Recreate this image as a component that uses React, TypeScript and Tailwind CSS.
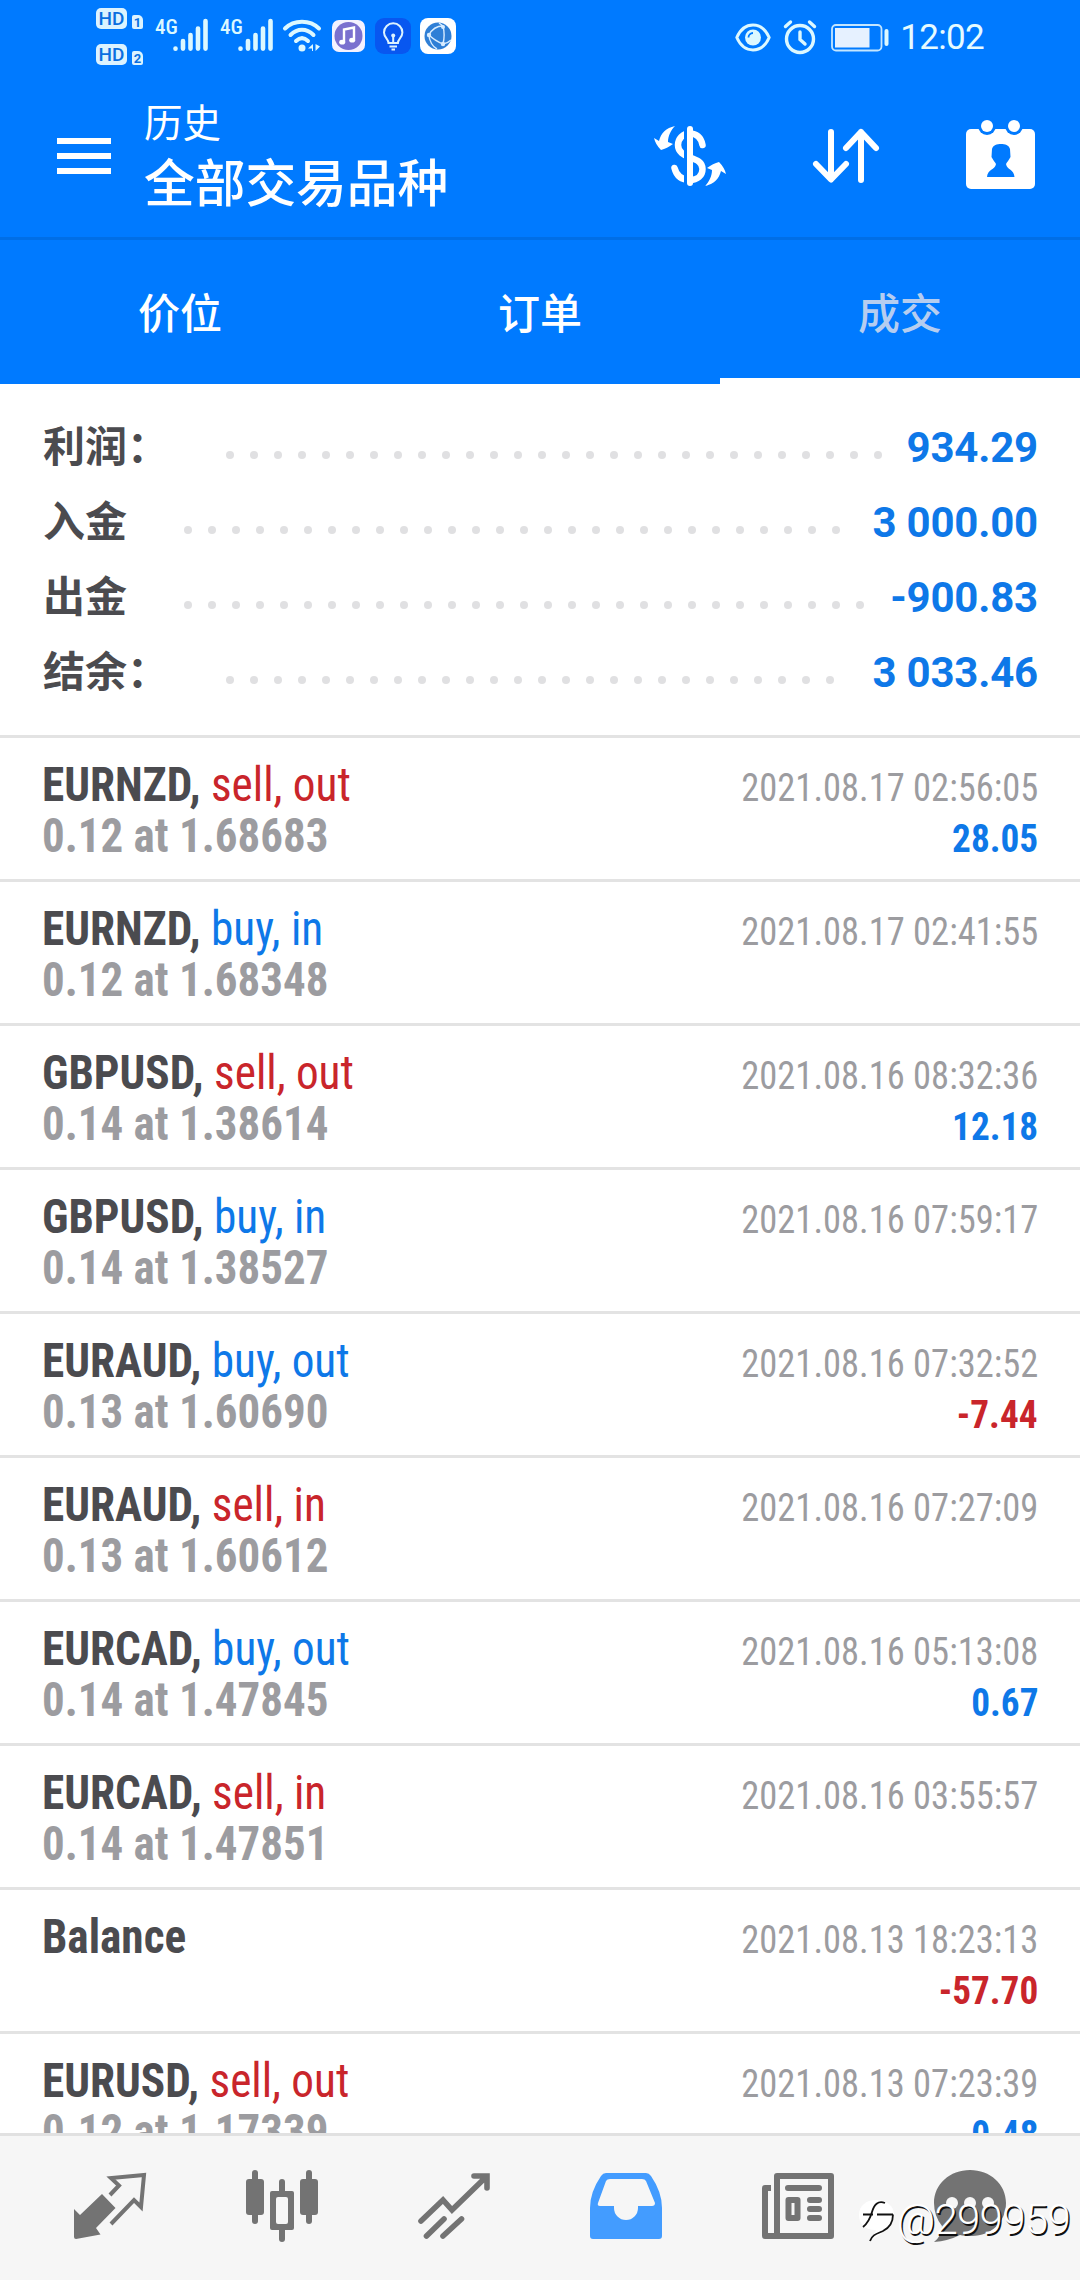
import type { ReactNode } from 'react';

const totals = [
  { label: '利润：', value: '934.29', dots: 28 },
  { label: '入金', value: '3 000.00', dots: 28 },
  { label: '出金', value: '-900.83', dots: 29 },
  { label: '结余：', value: '3 033.46', dots: 26 },
];

interface Deal {
  symbol: string;
  action?: string;
  volume?: string;
  time: string;
  profit?: string;
}

const deals: Deal[] = [
  { symbol: 'EURNZD', action: 'sell, out', volume: '0.12 at 1.68683', time: '2021.08.17 02:56:05', profit: '28.05' },
  { symbol: 'EURNZD', action: 'buy, in', volume: '0.12 at 1.68348', time: '2021.08.17 02:41:55' },
  { symbol: 'GBPUSD', action: 'sell, out', volume: '0.14 at 1.38614', time: '2021.08.16 08:32:36', profit: '12.18' },
  { symbol: 'GBPUSD', action: 'buy, in', volume: '0.14 at 1.38527', time: '2021.08.16 07:59:17' },
  { symbol: 'EURAUD', action: 'buy, out', volume: '0.13 at 1.60690', time: '2021.08.16 07:32:52', profit: '-7.44' },
  { symbol: 'EURAUD', action: 'sell, in', volume: '0.13 at 1.60612', time: '2021.08.16 07:27:09' },
  { symbol: 'EURCAD', action: 'buy, out', volume: '0.14 at 1.47845', time: '2021.08.16 05:13:08', profit: '0.67' },
  { symbol: 'EURCAD', action: 'sell, in', volume: '0.14 at 1.47851', time: '2021.08.16 03:55:57' },
  { symbol: 'Balance', time: '2021.08.13 18:23:13', profit: '-57.70' },
  { symbol: 'EURUSD', action: 'sell, out', volume: '0.12 at 1.17339', time: '2021.08.13 07:23:39', profit: '0.48' },
];

function HdBadge({ sim }: { sim: number }) {
  return (
    <div className="flex items-end gap-[5px]">
      <span className="flex h-[21px] w-[31px] items-center justify-center rounded-[5px] bg-[#dcf3ff] text-[19px] font-medium leading-none text-[#0a6fe0]">
        HD
      </span>
      <span className="flex h-[14px] w-[11px] items-center justify-center rounded-[2px] rounded-tr-[5px] bg-[#dcf3ff] text-[13px] font-bold leading-none text-[#0a6fe0]">
        {sim}
      </span>
    </div>
  );
}

function Signal() {
  return (
    <div className="flex w-[54px] items-start">
      <span className="w-[18px] text-[21px] font-medium leading-[18px] [font-stretch:75%]">4G</span>
      <svg className="h-[34px] w-[36px] shrink-0" viewBox="0 0 36 34" stroke="#dcf8ff" strokeWidth="4.6" strokeLinecap="round">
        <path d="M2.5 30.6v.2M10 23v7.6M17.500 17v13.600M25 10.500v20.100M32.500 3v27.600" />
      </svg>
    </div>
  );
}

function StatusBar() {
  return (
    <div className="flex h-[72px] items-start pl-24 text-[#dcf8ff]">
      <div className="mt-2 flex w-[47px] flex-col gap-[15px]">
        <HdBadge sim={1} />
        <HdBadge sim={2} />
      </div>
      <div className="ml-[12px] mt-[18px] flex gap-[11px]">
        <Signal />
        <Signal />
      </div>
      <svg className="ml-[8px] mt-[18px] h-[36px] w-[40px]" viewBox="0 0 40 36" fill="none" stroke="#dcf8ff" strokeWidth="4" strokeLinecap="round">
        <path d="M3 10.500C12 1.500 28 1.500 37 10.500M8.500 17C15.500 10 24.500 10 31.500 17M14 23c4-3.800 8-3.800 12 0" />
        <circle cx="20" cy="30" r="3.500" fill="#dcf8ff" stroke="none" />
        <path d="M31 26v7h-1v-2.500h-4zM33.500 33v-7l4.500 2.500z" fill="#dcf8ff" stroke="none" />
      </svg>
      <svg className="ml-[10px] mt-[19px] h-[34px] w-[33px]" viewBox="0 0 33 34">
        <rect y="1" width="33" height="32" rx="7" fill="#f4f2ff" />
        <circle cx="16.500" cy="17" r="14" fill="#7a70cf" />
        <path d="M12 23V10.500l10-2v12" fill="none" stroke="#fff" strokeWidth="2.400" />
        <ellipse cx="10.200" cy="23.200" rx="3" ry="2.400" fill="#fff" />
        <ellipse cx="20.200" cy="21.200" rx="3" ry="2.400" fill="#fff" />
      </svg>
      <svg className="ml-[10px] mt-[18px] h-[36px] w-[36px]" viewBox="0 0 36 36" fill="none" stroke="#dcf3ff" strokeWidth="2">
        <rect width="36" height="36" rx="9" fill="#0857f0" stroke="none" />
        <path d="M13.500 25c0-4-4.500-5.500-4.500-10.500a9.200 9.200 0 0 1 18.400 0c0 5-4.500 6.500-4.500 10.500zM14.500 28.500h7.500M16.500 31.500h3.500M18.200 25v-8" />
        <circle cx="18.200" cy="17.500" r="2" fill="#dcf3ff" stroke="none" />
      </svg>
      <svg className="ml-[9px] mt-[18px] h-[36px] w-[36px]" viewBox="0 0 36 36" fill="none" stroke="#d8ecff" strokeWidth="1.400">
        <rect width="36" height="36" rx="8" fill="#fff" stroke="none" />
        <circle cx="18" cy="18" r="13.500" fill="#2f7fd6" stroke="none" />
        <path d="M9 17C12 11 17 8 23 8M9 17c4 4 9 7 14 9M23 8c1.500 6 1.500 12 0 18M9 17C9 23 13 29 17 31M23 26c3-.5 6-2 8-4M23 8l-4-3" />
        <g fill="#d8ecff" stroke="none">
          <circle cx="9" cy="17" r="2.200" />
          <circle cx="23" cy="9" r="2" />
          <circle cx="23" cy="26" r="2.200" />
        </g>
      </svg>

      <div className="ml-auto mr-[96px] mt-[18px] flex items-center">
        <svg className="h-[36px] w-[36px]" viewBox="0 0 36 36" fill="none" stroke="#dcf8ff" strokeWidth="3">
          <path d="M1.800 18.500C9 1.800 27 1.800 34.200 18.500C27 35 9 35 1.800 18.500z" strokeLinejoin="round" />
          <circle cx="18" cy="18.500" r="8" fill="#dcf8ff" stroke="none" />
          <path d="M13.500 18.500a4.500 4.500 0 0 1 4.500-4.500" stroke="#007aff" strokeWidth="1.800" />
        </svg>
        <svg className="ml-[12px] h-[36px] w-[34px]" viewBox="0 0 34 36" fill="none" stroke="#dcf8ff" strokeWidth="3.400" strokeLinecap="round">
          <circle cx="17" cy="20" r="13.500" />
          <path d="M2.500 7.500l5-4.500M31.500 7.500l-5-4.500M17 13v7.500l5 4.500" />
        </svg>
        <svg className="ml-[14px] h-[36px] w-[58px]" viewBox="0 0 58 36" fill="none">
          <rect x="1" y="6" width="49.500" height="25.500" rx="4" stroke="#c4e6ff" strokeWidth="1.800" />
          <rect x="4" y="9" width="34.500" height="19.500" fill="#e6f1ff" />
          <rect x="53.500" y="10" width="4" height="17" rx="2" fill="#dcf8ff" />
        </svg>
        <span className="ml-[11px] mt-[2px] text-[35px] leading-[36px] tracking-[-0.7px] text-[#e6fbff]">12:02</span>
      </div>
    </div>
  );
}

function Header() {
  return (
    <header className="flex h-[165px] items-center pl-[57px] pr-[42px] pt-[3px]">
      <div className="flex w-[54px] flex-col gap-[9px]">
        <span className="h-[6px] bg-white" />
        <span className="h-[6px] bg-white" />
        <span className="h-[6px] bg-white" />
      </div>
      <div className="ml-[33px] mt-[2px] text-white">
        <div className="text-[38.5px] leading-[56px]">历史</div>
        <div className="text-[50.7px] font-medium leading-[66px]">全部交易品种</div>
      </div>
      <div className="ml-auto flex gap-[84px]">
        <svg className="size-[72px]" viewBox="0 0 72 72" fill="none" stroke="#fff">
          <path d="M48.500 25C47 17 42 13.500 36 13.500C28.500 13.500 24 19 24 25C24 32 30 35 36 37.500C43 40 48.500 42 48.500 49C48.500 56 43 60 36 60C28 60 22.500 56 20.500 48" strokeWidth="6.5" strokeLinecap="round" />
          <path d="M31.500 6v60" stroke="#007aff" strokeWidth="3" />
          <path d="M36 9v54" strokeWidth="6" strokeLinecap="round" />
          <path d="M21 6C12 8 7 13 5 21L0 18C1 22 3 26 7 30C11 29 15 27 19 24L14 22C14 16 17 10 21 6z" fill="#fff" stroke="none" />
          <path d="M51 66C60 64 65 59 67 51L72 54C71 50 69 46 65 42C61 43 57 45 53 48L58 50C58 56 55 62 51 66z" fill="#fff" stroke="none" />
        </svg>
        <svg className="size-[72px]" viewBox="0 0 72 72" fill="none" stroke="#fff" strokeWidth="6" strokeLinecap="round" strokeLinejoin="round">
          <path d="M21 12v47M6 44l15 15.500L36 44M51 60V12M36 28l15-16l15 16" />
        </svg>
        <svg className="size-[72px] overflow-visible" viewBox="0 0 72 72" fill="#fff">
          <rect y="9" width="69" height="60" rx="5" />
          <circle cx="21" cy="6" r="9" fill="#007aff" />
          <circle cx="48" cy="6" r="9" fill="#007aff" />
          <circle cx="21" cy="6" r="6" />
          <circle cx="48" cy="6" r="6" />
          <path d="M26 29C27 25 31 24 35 24C39 24 43 25 44 29L44.500 37C43 40 41 42 40 44C41 50 48 49 48.500 57H21C21.500 49 29 50 30 44C29 42 27 40 25.500 37z" fill="#007aff" />
        </svg>
      </div>
    </header>
  );
}

function Tabs() {
  return (
    <nav className="grid h-[147px] grid-cols-3 border-t-[3px] border-[#006ee6] text-center text-[42px] font-medium leading-[138px] text-white">
      <div className="pt-[6px]">价位</div>
      <div className="pt-[6px]">订单</div>
      <div className="h-36 border-b-[6px] border-white pt-[6px] text-[#b5cdf0]">
        <div className="h-[132px]">成交</div>
      </div>
    </nav>
  );
}

function Totals() {
  return (
    <section className="h-[351px] pl-[43px] pr-[42px] pt-[26px]">
      {totals.map((row) => (
        <div key={row.label} className="flex h-[75px] items-center justify-between text-[42px] font-bold">
          <span className="text-[#4b4b4f]">{row.label}</span>
          <div className="mt-[15px] flex grow gap-4 pl-[57px]">
            {Array.from({ length: row.dots }, (_, i) => (
              <span key={i} className="size-2 rounded-full bg-[#e0e0e2]" />
            ))}
          </div>
          <span className="tracking-[-0.2px] text-[#0e78e8]">{row.value}</span>
        </div>
      ))}
    </section>
  );
}

function DealRow({ deal }: { deal: Deal }) {
  const actionColor = deal.action?.startsWith('sell') ? 'text-[#c9252b]' : 'text-[#0e78e8]';
  const profitColor = deal.profit?.startsWith('-') ? 'text-[#c9252b]' : 'text-[#0e78e8]';

  return (
    <div className="h-36 shrink-0 border-t-[3px] border-[#e3e3e3] px-[42px] pt-[21px] [font-stretch:75%]">
      <div className="flex h-[51px] items-baseline justify-between text-[48px] leading-[51px]">
        <span className="origin-left scale-x-[.942]">
          <b className="text-[#4b4b4f]">
            {deal.symbol}
            {deal.action && ','}
          </b>{' '}
          <span className={actionColor}>{deal.action}</span>
        </span>
        <span className="origin-right scale-x-[.936] text-[39px] leading-none text-[#9c9ca0]">{deal.time}</span>
      </div>
      <div className="flex h-[51px] items-baseline justify-between text-[48px] font-bold leading-[51px]">
        <span className="origin-left scale-x-[.937] text-[#9c9ca0]">{deal.volume ?? '\u00a0'}</span>
        <span className={`origin-right scale-x-[.955] text-[39px] leading-none ${profitColor}`}>{deal.profit}</span>
      </div>
    </div>
  );
}

function NavIcon({ children }: { children: ReactNode }) {
  return (
    <svg className="mx-auto size-[72px] overflow-visible text-[#737373]" viewBox="0 0 72 72" fill="none" stroke="currentColor">
      {children}
    </svg>
  );
}

function BottomNav() {
  return (
    <nav className="relative grid h-[147px] shrink-0 grid-cols-6 border-t-[3px] border-[#e1e1e1] bg-[#f6f6f6] px-6 pt-[34px]">
      <NavIcon>
        <path d="M36 25l9-9.500l-8-7.500L70 5l-3 32l-7-7l-23 24" strokeWidth="4" />
        <path d="M28 24l13.500 14L22 58l4.500 6.500L2 69q-2 0-2-2V39l6 6z" fill="currentColor" stroke="none" />
      </NavIcon>
      <NavIcon>
        <g fill="currentColor" stroke="none">
          <rect x="0" y="9" width="18" height="36" rx="3" />
          <rect x="6" y="0" width="6" height="54" rx="3" />
          <rect x="54" y="9" width="18" height="36" rx="3" />
          <rect x="60" y="0" width="6" height="54" rx="3" />
          <rect x="33" y="9" width="6" height="63" rx="3" />
          <rect x="24" y="21" width="24" height="39" rx="2" />
        </g>
        <rect x="30" y="27" width="12" height="27" rx="2" fill="#f6f6f6" stroke="none" />
      </NavIcon>
      <NavIcon>
        <path d="M3 51l22-21l9 10L68 7M56 6h13v12M8.500 66L26 49M25 66L43.500 49" strokeWidth="5.600" strokeLinecap="round" />
      </NavIcon>
      <NavIcon>
        <path d="M16 3h40q3 0 5 3Q72 22 72 38v28q0 3-3 3H3q-3 0-3-3V38Q0 22 11 6q2-3 5-3z" fill="#439cff" stroke="none" />
        <path d="M20 9h32q3 0 4 2l9 22q0 3-3 3H48v2a12 12 0 0 1-24 0v-2H10q-3 0-2-3l8-22q1-2 4-2z" fill="#f6f6f6" stroke="none" />
      </NavIcon>
      <NavIcon>
        <path d="M15 6h54v60H15zM9 18H3v48h12" strokeWidth="6" strokeLinejoin="round" />
        <path d="M26 18h31M48 30h9M48 39h9M48 48h9" strokeWidth="6" strokeLinecap="round" />
        <path d="M26.500 30h9v18h-9z" strokeWidth="6" strokeLinejoin="round" />
      </NavIcon>
      <NavIcon>
        <path d="M36 0C56 0 72 14 72 33S57 66 38 66q-8 0-12-1Q14 71 0 72Q7 67 8 56Q0 46 0 33C0 14 16 0 36 0z" fill="currentColor" stroke="none" />
        <g fill="#f6f6f6" stroke="none">
          <circle cx="18" cy="33" r="6" />
          <circle cx="36" cy="33" r="6" />
          <circle cx="54" cy="33" r="6" />
        </g>
      </NavIcon>

      {/* watermark */}
      <div className="absolute right-[10px] top-[60px] flex items-center">
        <svg className="mr-[1px] h-[48px] w-[38px]" viewBox="0 0 38 48" fill="none">
          <path d="M18 4C29 4 36 10 36 19C36 30 26 36 14 44L18 34C7 34 1 28 1 19C1 10 8 4 18 4z" fill="#fff" />
          <path d="M27 7C20 4 16 9 14 16C12 23 10 27 5 31M5 18.500h10M19 18.500h16M35 18.500C35 27 31 32 25 35C18 38 14 39 12 45" stroke="#111" strokeWidth="1.8" />
        </svg>
        <span className="text-[42px] font-light leading-[48px] tracking-[-0.7px] text-white [text-shadow:1.5px_1.5px_0_#111]">@299959</span>
      </div>
    </nav>
  );
}

export default function App() {
  return (
    <div className="flex h-[2280px] w-[1080px] flex-col overflow-hidden bg-white font-['Roboto','Noto_Sans_CJK_SC',sans-serif]">
      <div className="shrink-0 bg-[#007aff]">
        <StatusBar />
        <Header />
        <Tabs />
      </div>
      <Totals />
      <main className="flex min-h-0 flex-1 flex-col overflow-hidden">
        {deals.map((deal) => (
          <DealRow key={deal.time} deal={deal} />
        ))}
      </main>
      <BottomNav />
    </div>
  );
}
